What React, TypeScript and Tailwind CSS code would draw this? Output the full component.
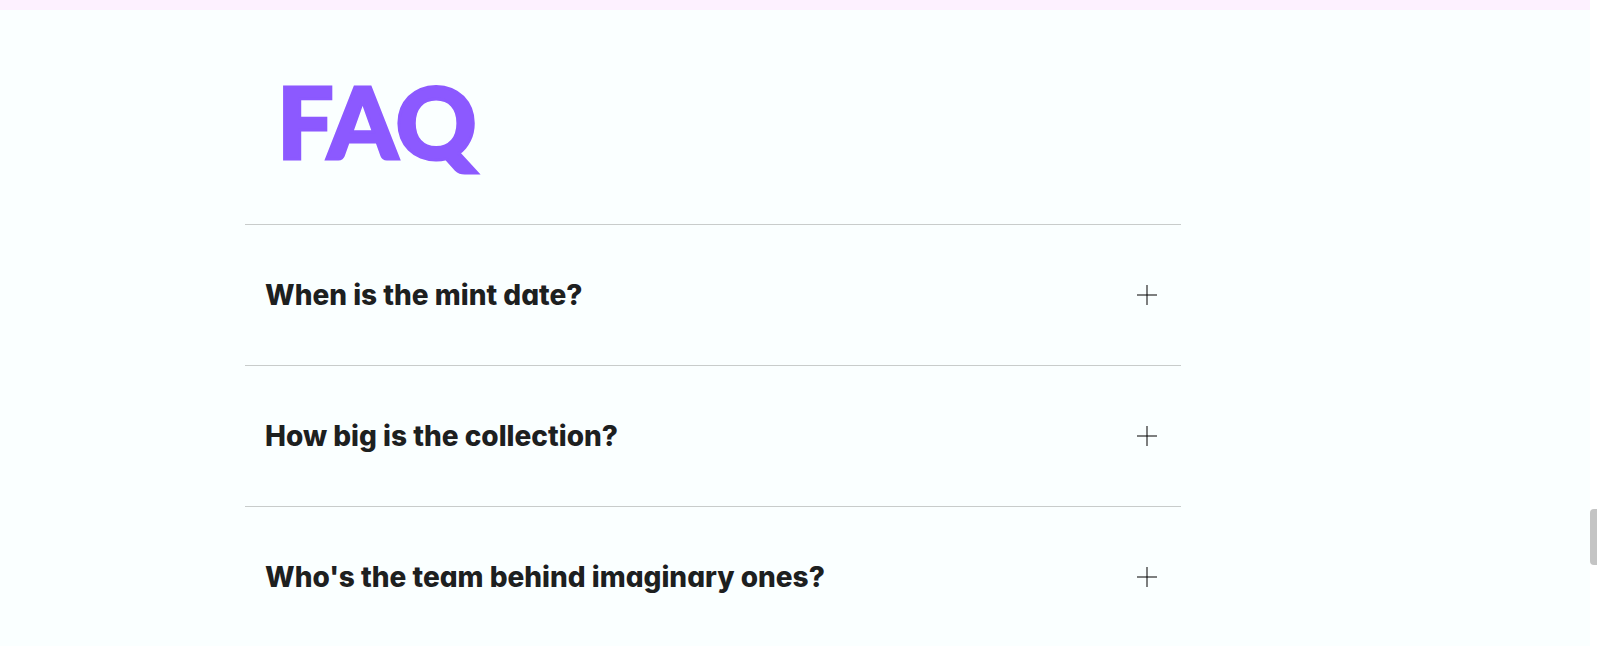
import { useState } from "react";

const questions = [
  { title: "When is the mint date?", answer: "The mint date will be announced soon." },
  { title: "How big is the collection?", answer: "The size of the collection will be announced soon." },
  { title: "Who's the team behind imaginary ones?", answer: "Meet the team on our about page." },
];

function PlusIcon({ open }: { open: boolean }) {
  return (
    <svg viewBox="0 0 20 20" className="size-5 shrink-0" aria-hidden="true" shapeRendering="crispEdges">
      <rect x="0" y="9" width="20" height="2" fill="#000" fillOpacity="0.5" />
      {!open && <rect x="9" y="0" width="2" height="20" fill="#000" fillOpacity="0.5" />}
    </svg>
  );
}

function FaqItem({ title, answer, id }: { title: string; answer: string; id: string }) {
  const [open, setOpen] = useState(false);
  return (
    <div className="border-t border-[#c8cccb]">
      <h2>
        <button
          type="button"
          aria-expanded={open}
          aria-controls={id}
          onClick={() => setOpen(!open)}
          className="flex w-full cursor-pointer items-center justify-between gap-6 py-[52px] pr-6 pl-5 text-left text-[28px] leading-9 font-extrabold text-[#1d201f]"
        >
          {title}
          <PlusIcon open={open} />
        </button>
      </h2>
      <div id={id} hidden={!open} className="px-5 pb-12 text-lg text-[#1d201f]">
        {answer}
      </div>
    </div>
  );
}

export default function App() {
  return (
    <div className="flex h-screen overflow-hidden bg-white font-['Inter',sans-serif] [font-feature-settings:'cv11']">
      <main className="min-w-0 flex-1 overflow-hidden bg-[#faffff]">
        <div className="h-[10px] bg-[#fdf1ff]" />
        <section className="grid grid-cols-[245fr_936fr_409fr]">
          <div className="col-start-2">
            <h1 className="px-8 pt-[50px] pb-11 font-['Lato',sans-serif] text-[100px] leading-[120px] font-black text-[#8c59ff] [-webkit-text-stroke:3px_#8c59ff]">FAQ</h1>
            {questions.map((q, i) => (
              <FaqItem key={q.title} id={`answer-${i}`} title={q.title} answer={q.answer} />
            ))}
          </div>
        </section>
      </main>
      <div className="relative w-[7px] shrink-0 bg-white" aria-hidden="true">
        <div className="absolute inset-x-0 top-[509px] h-14 rounded-l-[4px] bg-[#c4c4c4]" />
      </div>
    </div>
  );
}
